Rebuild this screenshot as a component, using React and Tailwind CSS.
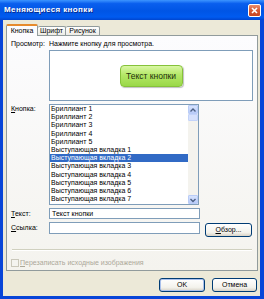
import React from 'react';

const items = [
  'Бриллиант 1',
  'Бриллиант 2',
  'Бриллиант 3',
  'Бриллиант 4',
  'Бриллиант 5',
  'Выступающая вкладка 1',
  'Выступающая вкладка 2',
  'Выступающая вкладка 3',
  'Выступающая вкладка 4',
  'Выступающая вкладка 5',
  'Выступающая вкладка 6',
  'Выступающая вкладка 7',
];

function Chevron({ up }) {
  return (
    <svg width="8" height="8" viewBox="0 0 8 8">
      <path d={up ? 'M1.5 5.5 L4 3 L6.5 5.5' : 'M1.5 3 L4 5.5 L6.5 3'} fill="none" stroke="#4d6185" strokeWidth="1.4" />
    </svg>
  );
}

function XpButton({ children, w, main }) {
  return (
    <div
      className={`h-[14px] ${w} flex items-center justify-center rounded-[3px] border border-[#003c74] bg-[linear-gradient(to_bottom,#ffffff,#f3f2ec_70%,#d8d2c6)] text-[7px] leading-[8px] ${main ? 'shadow-[inset_0_0_0_1px_#a9c0ec]' : ''}`}
    >
      {children}
    </div>
  );
}

export default function App() {
  return (
    <div className="w-[264px] h-[299px] bg-[#0845d8] flex flex-col overflow-hidden font-['Liberation_Sans',Arial,sans-serif] text-black">
      {/* title bar */}
      <div className="h-[20px] flex items-center justify-between pl-[4px] pr-[3px] bg-[linear-gradient(to_bottom,#3d95ff,#0a5fee_18%,#0055e5_55%,#005bf0_85%,#0045cf)]">
        <span className="text-white text-[8px] font-bold tracking-[0.4px] [text-shadow:1px_1px_0_#0a2a8a]">
          Меняющиеся кнопки
        </span>
        <div className="w-[13px] h-[13px] rounded-[2px] border border-white bg-[linear-gradient(to_bottom,#ec8e6c,#d65a34_50%,#c44420)] flex items-center justify-center">
          <svg width="7" height="7" viewBox="0 0 7 7">
            <path d="M1 1 L6 6 M6 1 L1 6" stroke="white" strokeWidth="1.6" />
          </svg>
        </div>
      </div>

      {/* body */}
      <div className="ml-[3px] w-[257px] h-[276px] bg-[#ece9d8] flex flex-col pt-[4px]">
        {/* tabs */}
        <div className="flex items-end h-[12px] ml-[3px] relative z-10">
          <div className="w-[32px] h-[12px] bg-[#fcfcfe] border-x border-[#919b9c] border-t-2 border-t-[#e68b2c] rounded-t-[2px] flex items-center justify-center text-[7px] leading-[8px]">
            Кнопка
          </div>
          <div className="w-[28px] h-[9px] bg-[linear-gradient(to_bottom,#ffffff,#ecebe6)] border-t border-r border-[#919b9c] rounded-t-[2px] flex items-center justify-center text-[7px] leading-[8px] mb-px">
            Шрифт
          </div>
          <div className="w-[34px] h-[9px] bg-[linear-gradient(to_bottom,#ffffff,#ecebe6)] border-t border-r border-[#919b9c] rounded-t-[2px] flex items-center justify-center text-[7px] leading-[8px] mb-px">
            Рисунок
          </div>
        </div>

        {/* panel */}
        <div className="-mt-px ml-[3px] w-[252px] h-[236px] border border-[#919b9c] bg-[linear-gradient(to_bottom,#fcfcfe,#f4f3ee)] pl-[4px] flex flex-col text-[7px] leading-[8px]">
          <div className="mt-[4px] flex">
            <span className="w-[38px]">Просмотр:</span>
            <span>Нажмите кнопку для просмотра.</span>
          </div>

          <div className="mt-[2px] ml-[38px] w-[204px] h-[51px] border border-[#7f9db9] bg-white flex items-center justify-center">
            <div className="w-[63px] h-[22px] rounded-[4px] border border-[#86c23a] bg-[linear-gradient(to_bottom,#d9f7a4,#b4e866_45%,#9ad848)] shadow-[1px_1px_1px_rgba(0,0,0,0.25)] flex items-center justify-center text-[8.5px] leading-[10px] text-[#1d2e0c]">
              Текст кнопки
            </div>
          </div>

          <div className="mt-[3px] flex">
            <span className="w-[38px] pt-[1px]">
              <span className="underline">К</span>нопка:
            </span>
            <div className="w-[150px] h-[101px] border border-[#7f9db9] bg-white flex overflow-hidden">
              <div className="flex-1 overflow-hidden">
                {items.map((it) => (
                  <div
                    key={it}
                    className={`h-[8.2px] leading-[8.2px] pl-[1px] whitespace-nowrap ${it === 'Выступающая вкладка 2' ? 'bg-[#316ac5] text-white' : ''}`}
                  >
                    {it}
                  </div>
                ))}
              </div>
              <div className="w-[10px] bg-[#f4f3ee] flex flex-col">
                <div className="h-[9px] rounded-[1px] border border-[#b9ccf7] bg-[linear-gradient(to_bottom,#d7e3fd,#b8cbf8)] flex items-center justify-center">
                  <Chevron up />
                </div>
                <div className="h-[7px] rounded-[1px] border border-[#c3d3fa] bg-[#d6e1fc]" />
                <div className="flex-1" />
                <div className="h-[9px] rounded-[1px] border border-[#b9ccf7] bg-[linear-gradient(to_bottom,#d7e3fd,#b8cbf8)] flex items-center justify-center">
                  <Chevron />
                </div>
              </div>
            </div>
          </div>

          <div className="mt-[3px] flex items-center">
            <span className="w-[38px]">
              <span className="underline">Т</span>екст:
            </span>
            <div className="w-[151px] h-[11px] border border-[#7f9db9] bg-white pl-[2px] flex items-center">
              Текст кнопки
            </div>
          </div>

          <div className="mt-[3px] flex items-start">
            <span className="w-[38px] pt-[2px]">
              <span className="underline">С</span>сылка:
            </span>
            <div className="w-[151px] h-[12px] border border-[#7f9db9] bg-white" />
            <div className="ml-[5px] mt-[1px]">
              <XpButton w="w-[47px]">
                <span>
                  <span className="underline">О</span>бзор...
                </span>
              </XpButton>
            </div>
          </div>

          <div className="mt-[12px] ml-[1px] w-[240px] border-t border-b border-t-[#d0d0bf] border-b-white" />

          <div className="mt-[8px] flex items-center text-[#aca899]">
            <div className="w-[8px] h-[8px] border border-[#cac8bb] bg-[#f4f4f0]" />
            <span className="ml-[1px]">
              <span className="underline">П</span>ерезаписать исходные изображения
            </span>
          </div>
        </div>

        {/* buttons */}
        <div className="mt-[7px] flex justify-end gap-[7px] pr-[3px]">
          <XpButton w="w-[46px]" main>
            OK
          </XpButton>
          <XpButton w="w-[45px]">Отмена</XpButton>
        </div>
      </div>
    </div>
  );
}
